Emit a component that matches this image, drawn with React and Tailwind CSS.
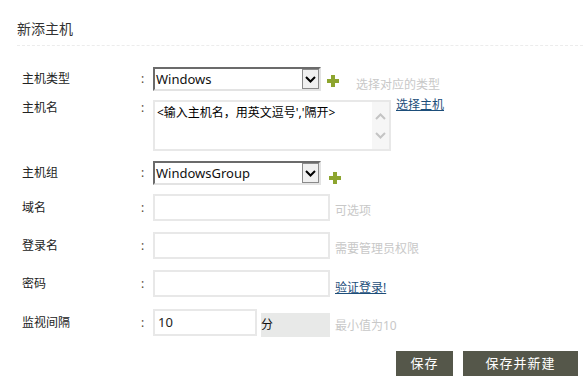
import React from 'react';

const Chevron = ({ up }) => (
  <svg width="11" height="7" viewBox="0 0 11 7">
    <path d={up ? 'M1 6 L5.5 1.5 L10 6' : 'M1 1 L5.5 5.5 L10 1'} fill="none" stroke="currentColor" strokeWidth="2" />
  </svg>
);

const Plus = ({ className }) => (
  <svg width="12" height="12" viewBox="0 0 12 12" className={className}>
    <path d="M4 0h4v4h4v4H8v4H4V8H0V4h4z" fill="#8da52f" />
  </svg>
);

// fake windows-classic select
const Select = ({ value }) => (
  <div className="w-[168px] h-[24px] flex items-center border-2 border-t-[#6b6b6b] border-l-[#6b6b6b] border-r-[#e3e3e3] border-b-[#e3e3e3] bg-white">
    <span className="flex-1 pl-[1px] text-[13px] leading-[18px] text-[#111]">{value}</span>
    <div className="w-[17px] h-[20px] border border-[#8a8a8a] bg-[#f0f0f0] flex items-center justify-center text-black">
      <Chevron />
    </div>
  </div>
);

const Label = ({ children, top }) => (
  <>
    <div className={`w-[119px] text-[12px] leading-[16px] text-[#222] ${top ? 'pt-[-1px]' : ''}`}>{children}</div>
    <div className="w-[12px] text-[12px] leading-[16px] text-[#5a4d3a]">:</div>
  </>
);

const Input = ({ w = 'w-[177px]', value }) => (
  <div className={`${w} h-[27px] border-2 border-[#e8e8e8] bg-white flex items-center pl-[3px] text-[13px] text-[#222]`}>{value}</div>
);

const Hint = ({ children }) => (
  <span className="ml-[5px] text-[12px] leading-[16px] text-[#c8c8c8] mb-[-1px]">{children}</span>
);

export default function App() {
  return (
    <div className="w-[583px] h-[386px] bg-white font-['Noto_Sans','Noto_Sans_CJK_SC',sans-serif]">
      <div className="pl-[17px] pt-[19px] h-[45px] text-[14px] leading-[20px] text-[#333]">新添主机</div>
      <div className="ml-[17px] border-t border-dashed border-[#ececec]" />

      <div className="pt-[21px] pl-[22px]">
        {/* 主机类型 */}
        <div className="flex items-center h-[24px]">
          <Label>主机类型</Label>
          <Select value="Windows" />
          <Plus className="ml-[6px] mt-[4px]" />
          <span className="ml-[17px] self-end mb-[-2px] text-[12px] leading-[16px] text-[#c8c8c8]">选择对应的类型</span>
        </div>

        {/* 主机名 */}
        <div className="flex items-start mt-[9px]">
          <Label top>主机名</Label>
          <div className="w-[238px] h-[51px] border-2 border-[#e8e8e8] bg-white flex">
            <div className="flex-1 pl-[2px] pt-[3px] text-[12px] leading-[16px] text-black">&lt;输入主机名，用英文逗号','隔开&gt;</div>
            <div className="w-[17px] bg-[#f6f6f6] flex flex-col items-center justify-center gap-[12px] text-[#c4c4c4]">
              <Chevron up />
              <Chevron />
            </div>
          </div>
          <a className="ml-[5px] mt-[-3px] text-[12px] leading-[16px] text-[#1d4e7a] underline">选择主机</a>
        </div>

        {/* 主机组 */}
        <div className="flex items-center h-[24px] mt-[10px]">
          <Label>主机组</Label>
          <Select value="WindowsGroup" />
          <Plus className="ml-[8px] mt-[10px]" />
        </div>

        {/* 域名 */}
        <div className="flex items-center mt-[9px]">
          <Label>域名</Label>
          <Input />
          <div className="self-end"><Hint>可选项</Hint></div>
        </div>

        {/* 登录名 */}
        <div className="flex items-center mt-[11px]">
          <Label>登录名</Label>
          <Input />
          <div className="self-end"><Hint>需要管理员权限</Hint></div>
        </div>

        {/* 密码 */}
        <div className="flex items-center mt-[11px]">
          <Label>密码</Label>
          <Input />
          <a className="ml-[5px] self-end mb-[1px] text-[12px] leading-[16px] text-[#1d4e7a] underline">验证登录!</a>
        </div>

        {/* 监视间隔 */}
        <div className="flex items-center mt-[12px]">
          <Label>监视间隔</Label>
          <Input w="w-[104px]" value="10" />
          <div className="ml-[4px] w-[69px] h-[24px] self-end mb-[-1px] bg-[#e8e9e8] flex items-center text-[12px] text-[#111]">分</div>
          <div className="self-end"><Hint>最小值为10</Hint></div>
        </div>
      </div>

      <div className="flex justify-end gap-[10px] pr-[5px] mt-[15px]">
        <button className="w-[57px] h-[25px] bg-[#55574a] text-white text-[13px] tracking-[1px]">保存</button>
        <button className="w-[115px] h-[25px] bg-[#55574a] text-white text-[13px] tracking-[1px]">保存并新建</button>
      </div>
    </div>
  );
}
